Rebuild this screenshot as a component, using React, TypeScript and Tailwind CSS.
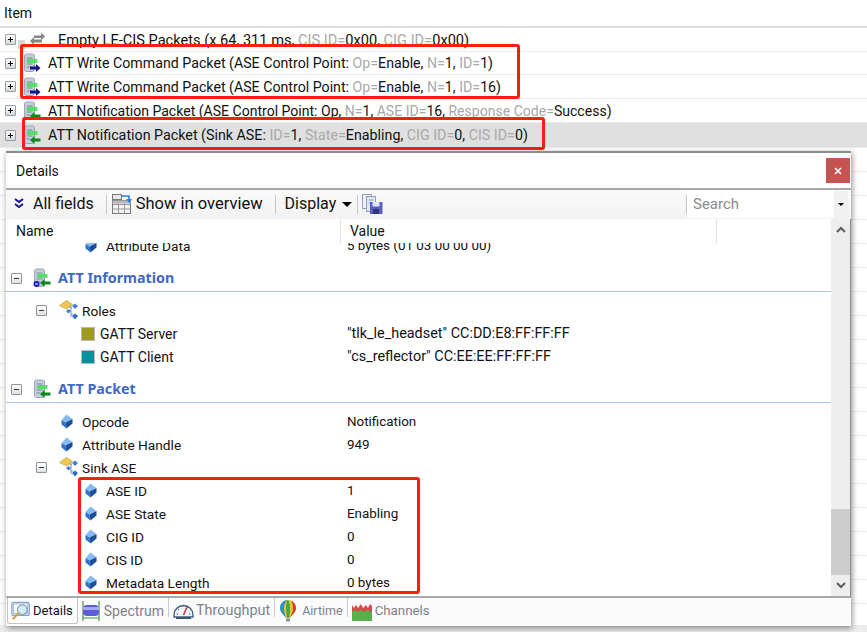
import React from "react";

const Plus = () => (
  <span className="relative inline-block w-[11px] h-[11px] border border-[#9a9fa6] bg-gradient-to-b from-white to-[#d5d8dc] rounded-[1px] shrink-0">
    <span className="absolute left-[2px] top-[4px] w-[5px] h-[1px] bg-black" />
    <span className="absolute left-[4px] top-[2px] w-[1px] h-[5px] bg-black" />
  </span>
);

const Minus = () => (
  <span className="relative inline-block w-[11px] h-[11px] border border-[#8f949b] bg-gradient-to-b from-white to-[#dfe1e4] rounded-[1px] shrink-0">
    <span className="absolute left-[2px] top-[4px] w-[5px] h-[1px] bg-[#333]" />
  </span>
);

const PacketIcon = ({ arrow = "right", info = false }: { arrow?: "right" | "left"; info?: boolean }) => (
  <svg width="20" height="20" viewBox="0 0 20 20" className="shrink-0">
    <rect x="1.500" y="1" width="10" height="17.500" rx="2" fill="#c6cedb" stroke="#9aa6b8" />
    <path d="M3.500 5h6M3.500 8h6M3.500 11h6M3.500 14h4" stroke="#7f8a9c" strokeWidth="1" />
    <rect x="4.500" y="6" width="10" height="4" fill="#48e255" opacity="0.9" />
    {arrow === "right" ? (
      <path d="M7 13.500h6v-2.500l4.500 4-4.500 4v-2.500H7z" fill="#14148c" />
    ) : (
      <path d="M17.500 13.500h-6v-2.500L7 15l4.500 4v-2.500h6z" fill="#0c8a1c" />
    )}
    {info && <circle cx="3.500" cy="16" r="3" fill="#1a1ad0" />}
    {info && <rect x="2" y="15.500" width="3" height="1" fill="#fff" />}
  </svg>
);

const Diamond = () => (
  <svg width="12" height="15" viewBox="0 0 12 15" className="shrink-0 ml-[2px]">
    <path d="M5.500 0.500 11.500 5 4.500 8.500 0.500 6z" fill="#86baf2" />
    <path d="M0.500 6 4.500 8.500 5.500 14.500 0.500 10.500z" fill="#2f74c8" />
    <path d="M11.500 5 4.500 8.500 5.500 14.500 11.500 9.500z" fill="#1a4f9c" />
  </svg>
);

const RolesIcon = () => (
  <svg width="20" height="21" viewBox="0 0 20 21" className="shrink-0">
    <path d="M0.500 5.500 7.500 0.500l6 4-6 4.500z" fill="#efc650" stroke="#b8963a" strokeWidth="0.6" />
    <path d="M10 7h3M12 7v10M12 14h2" stroke="#7c93ad" strokeWidth="1" fill="none" />
    <path d="M16 3.500l3 2.500-3 3-3-3z" fill="#3f84d8" />
    <path d="M9.500 9l2.500 2-2.500 2.500L7 11z" fill="#3f84d8" />
    <path d="M16 13.500l3 2.500-3 3.500-3-3.500z" fill="#2f6fc0" />
  </svg>
);

const Dim = ({ children }: { children: React.ReactNode }) => <span className="text-[#a9a9a9]">{children}</span>;

const ListRow = ({
  icon,
  children,
  selected = false,
  height = "h-[24px]",
  size = "text-[14.2px]",
}: {
  icon: React.ReactNode;
  children: React.ReactNode;
  selected?: boolean;
  height?: string;
  size?: string;
}) => (
  <div className={`${height} flex items-center pl-[5px] border-b border-[#ebebeb] ${selected ? "bg-[#e0e0e0]" : "bg-white"}`}>
    <Plus />
    <span className="w-[32px] flex justify-center shrink-0 pl-[2px]">{icon}</span>
    <span className={`whitespace-nowrap ${size}`}>{children}</span>
  </div>
);

const TreeRow = ({
  indent,
  toggle = false,
  icon,
  iconW = "w-[23px]",
  name,
  value,
  valueSize = "text-[13.400px]",
  nameSize = "text-[13.700px]",
}: {
  indent: string;
  toggle?: boolean;
  icon: React.ReactNode;
  iconW?: string;
  name: string;
  value?: string;
  valueSize?: string;
  nameSize?: string;
}) => (
  <div className="h-[23px] flex items-center shrink-0">
    <div className={`w-[341px] flex items-center ${indent} shrink-0`}>
      {toggle && <span className="w-[23px] -ml-[23px] flex"><Minus /></span>}
      <span className={`${iconW} flex shrink-0 items-center`}>{icon}</span>
      <span className={`whitespace-nowrap ${nameSize}`}>{name}</span>
    </div>
    {value && <span className={`whitespace-nowrap ${valueSize}`}>{value}</span>}
  </div>
);

const Section = ({ icon, title, className }: { icon: React.ReactNode; title: string; className: string }) => (
  <div className={`h-[29px] pt-[2px] flex items-center shrink-0 ${className}`}>
    <span className="ml-[5px] flex"><Minus /></span>
    <span className="ml-[11px] w-[25px] flex shrink-0">{icon}</span>
    <span className="font-bold text-[14.3px] text-[#4169c4] whitespace-nowrap" style={{ fontFamily: '"Noto Sans", sans-serif' }}>{title}</span>
  </div>
);

const Sep = () => <span className="w-[1px] h-[19px] bg-[#c9c9c9] shrink-0" />;

const ToolbarIconAllFields = () => (
  <svg width="12" height="12" viewBox="0 0 12 12" className="shrink-0">
    <path d="M2 1l4 3 4-3M2 6l4 3 4-3" stroke="#14148c" strokeWidth="2" fill="none" />
  </svg>
);

const OverviewIcon = () => (
  <svg width="20" height="20" viewBox="0 0 20 20" className="shrink-0">
    <rect x="0.5" y="0.5" width="9" height="5" fill="#e8e8e8" stroke="#777" />
    <rect x="0.5" y="6.5" width="18" height="13" fill="#f2f2f2" stroke="#777" />
    <path d="M0.5 10.5h18M0.5 15h18M6.5 6.5v13M12.5 6.5v13" stroke="#999" />
    <rect x="0.5" y="6.5" width="18" height="3" fill="#b8b8b8" />
    <path d="M10 2h7v4" stroke="#2b7fe0" strokeWidth="1.6" fill="none" />
    <path d="M14 5h6l-3 4z" fill="#2b7fe0" />
  </svg>
);

const SaveIcon = () => (
  <svg width="21" height="20" viewBox="0 0 21 20" className="shrink-0">
    <rect x="0.5" y="0.5" width="9" height="14" fill="#eef2f8" stroke="#8fa0b8" />
    <rect x="4.5" y="2.5" width="9" height="15" fill="#dfe7f2" stroke="#8fa0b8" />
    <path d="M6.5 6h5M6.5 9h4" stroke="#8fa0b8" />
    <rect x="8" y="8" width="12.5" height="12" fill="#5a60c0" />
    <rect x="10.5" y="8" width="7" height="4.5" fill="#dfe3f5" />
    <rect x="11" y="15" width="6" height="5" fill="#30347c" />
  </svg>
);

const TabDetailsIcon = () => (
  <svg width="20" height="22" viewBox="0 0 23 23" className="shrink-0">
    <rect x="1" y="1.5" width="20" height="15" rx="1" fill="#dfe8f5" stroke="#5a7fae" />
    <rect x="3" y="3.5" width="16" height="11" fill="#fff" stroke="#9bb6d6" />
    <circle cx="13" cy="10" r="5.500" fill="#d6ecf7" stroke="#7ea3b8" strokeWidth="1.3" />
    <path d="M8.500 14 2 21" stroke="#d9a441" strokeWidth="2.4" />
  </svg>
);

const SpectrumIcon = () => (
  <svg width="18" height="22" viewBox="0 0 18 22" className="shrink-0">
    <path d="M1 1v20M17 1v20M1 18h16" stroke="#3c9a46" strokeWidth="1.2" />
    <rect x="1" y="5" width="16" height="11" rx="4" fill="#5c5cd8" />
    <rect x="1" y="7" width="16" height="3" fill="#a7a7f2" />
  </svg>
);

const GaugeIcon = () => (
  <svg width="21" height="20" viewBox="0 0 21 20" className="shrink-0">
    <path d="M1 14a9.5 9.5 0 1 1 19 0v2H1z" fill="#f4f8fc" stroke="#45607e" strokeWidth="1.4" />
    <path d="M3 17h15" stroke="#3d5570" strokeWidth="2" />
    <path d="M10.5 14 14 6" stroke="#c8352c" strokeWidth="1.6" />
    <path d="M5 8l1 1M10.5 4v1.5M3.5 13h1.5M16 13h1.5" stroke="#45607e" />
  </svg>
);

const BalloonIcon = () => (
  <svg width="18" height="24" viewBox="0 0 18 24" className="shrink-0">
    <path d="M9 1C4 1 1 5 1 9c0 4 4 7 6 10h4c2-3 6-6 6-10 0-4-3-8-8-8z" fill="#e5c62c" />
    <path d="M1 9c0-4 3-8 8-8-2 1-4 4-4 8 0 3 1 7 2 10C5 16 1 13 1 9z" fill="#2f8fd8" />
    <path d="M9 1c-1.5 1-2 4-2 8 0 4 1 7 1 10h2c1-3 1-6 1-10 0-4-1-7-2-8z" fill="#4aa83f" />
    <path d="M12 1.5c3 1.500 5 4.500 5 7.500 0 4-4 7-6 10 1-3 3-6 3-10 0-3-1-6-2-7.500z" fill="#d83d2c" />
    <rect x="7" y="19.500" width="4" height="3" fill="#8a8fa0" />
  </svg>
);

const ChannelsIcon = () => (
  <svg width="20" height="20" viewBox="0 0 20 20" className="shrink-0">
    <path d="M0 4l2 3 2-3 2 3 3-4 2 4 3-3 2 3 2-4 2 2v15H0z" fill="#d84a4a" />
    <path d="M0 11l3-2 3 2 3-2 3 2 3-2 5 2v9H0z" fill="#56b04a" />
  </svg>
);

const Annot = ({ className }: { className: string }) => (
  <div className={`absolute border-[3px] border-[#ff1c10] rounded-[3px] pointer-events-none ${className}`} />
);

const Tab = ({
  icon,
  label,
  active = false,
  gap,
  size,
}: {
  icon: React.ReactNode;
  label: string;
  active?: boolean;
  gap: string;
  size: string;
}) => (
  <div
    className={`h-[26px] flex items-center ${gap} ${size} whitespace-nowrap ${
      active
        ? "bg-white border border-t-0 border-[#c4c4c4] rounded-b-[3px] pl-[3px] pr-[4px] text-[#111]"
        : "px-[1px] text-[#7c838c]"
    }`}
  >
    {icon}
    <span>{label}</span>
  </div>
);

export default function App() {
  const back = Array.from({ length: 20 }, (_, i) => i);
  return (
    <div
      className="relative w-[867px] h-[632px] overflow-hidden bg-white text-[14px] leading-[20px] text-[#111]"
      style={{ fontFamily: "Roboto, sans-serif" }}
    >
      <div className="h-[28px] pl-[4px] flex items-center border-b-2 border-[#dcdcdc]">Item</div>
      <ListRow
        size="text-[14.6px]"
        icon={
          <svg width="28" height="18" viewBox="0 0 28 18" className="-ml-[2px]">
            <rect x="0" y="9" width="7" height="9" fill="#d7d7d7" />
            <path d="M16 4.500h7V1.500l4 4-4 4v-2.500h-7zM24 8.500h-8V6l-4 4 4 4v-2.500h8z" fill="#858585" />
          </svg>
        }
      >
        <span className="pl-[10px]">Empty LE-CIS Packets (x 64, 311 ms, <Dim>CIS ID=</Dim>0x00, <Dim>CIG ID=</Dim>0x00)</span>
      </ListRow>
      <ListRow icon={<PacketIcon />} height="h-[23px]">
        ATT Write Command Packet (ASE Control Point: <Dim>Op=</Dim>Enable, <Dim>N=</Dim>1, <Dim>ID=</Dim>1)
      </ListRow>
      <ListRow icon={<PacketIcon />}>
        ATT Write Command Packet (ASE Control Point: <Dim>Op=</Dim>Enable, <Dim>N=</Dim>1, <Dim>ID=</Dim>16)
      </ListRow>
      <ListRow icon={<PacketIcon arrow="left" />} size="text-[14.05px]">
        ATT Notification Packet (ASE Control Point: Op, <Dim>N=</Dim>1, <Dim>ASE ID=</Dim>16, <Dim>Response Code=</Dim>Success)
      </ListRow>
      <ListRow icon={<PacketIcon arrow="left" />} selected height="h-[25px]" size="text-[14.27px]">
        ATT Notification Packet (Sink ASE: <Dim>ID=</Dim>1, <Dim>State=</Dim>Enabling, <Dim>CIG ID=</Dim>0, <Dim>CIS ID=</Dim>0)
      </ListRow>
      {back.map((i) => (
        <div key={i} className="h-[24px] border-b border-[#ebebeb]" />
      ))}
      <div className="absolute left-0 right-0 top-[625px] h-[7px] bg-[#ececec]" />

      <Annot className="left-[20px] top-[44px] w-[500px] h-[55px]" />
      <Annot className="left-[22px] top-[117px] w-[523px] h-[33px]" />

      {/* Details window */}
      <div className="absolute left-[6px] top-[151px] w-[845px] h-[475px] flex flex-col bg-white border-t-2 border-[#8c8c8c] shadow-[1px_2px_6px_rgba(0,0,0,0.45)]">
        <div className="h-[37px] shrink-0 flex items-center justify-between border-b-2 border-[#a8a8a8]">
          <span className="pl-[10px]">Details</span>
          <span className="w-[24px] h-[25px] mr-[1px] bg-[#c75252] flex items-center justify-center">
            <svg width="8" height="8" viewBox="0 0 8 8">
              <path d="M1 1l6 6M7 1 1 7" stroke="#fff" strokeWidth="1.6" />
            </svg>
          </span>
        </div>
        <div className="h-[29px] pb-[1px] shrink-0 flex items-center bg-gradient-to-b from-[#fafafa] to-[#f2f2f2] text-[16px]">
          <span className="ml-[7px] mr-[8px] flex"><ToolbarIconAllFields /></span>
          <span className="whitespace-nowrap">All fields</span>
          <span className="ml-[12px] mr-[5px] flex"><Sep /></span>
          <OverviewIcon />
          <span className="ml-[4px] whitespace-nowrap text-[16.500px]">Show in overview</span>
          <span className="ml-[12px] mr-[9px] flex"><Sep /></span>
          <span className="whitespace-nowrap">Display</span>
          <span className="ml-[6px] w-0 h-0 border-x-[5px] border-x-transparent border-t-[5px] border-t-black" />
          <span className="ml-[5px] mr-[4px] flex"><Sep /></span>
          <SaveIcon />
          <span className="ml-auto flex items-center h-full">
            <Sep />
            <span className="w-[147px] h-[28px] bg-white pl-[6px] flex items-center text-[#8a8a8a] text-[15px]">Search</span>
            <span className="w-[14px] h-[26px] bg-[#f0f0f0] flex items-center justify-center mr-[3px]">
              <span className="w-0 h-0 border-x-[3px] border-x-transparent border-t-[3px] border-t-black" />
            </span>
          </span>
        </div>
        <div className="flex-1 min-h-0 flex border-r border-[#8c8c8c] border-b-2 border-b-[#a8a8a8]">
          <div className="flex-1 min-w-0 flex flex-col overflow-hidden">
            <div className="h-[24px] shrink-0 flex items-center bg-white relative z-10">
              <span className="w-[335px] pl-[10px] h-full flex items-center border-r border-[#e2e2e2]">Name</span>
              <span className="w-[376px] pl-[9px] h-full flex items-center border-r border-[#e2e2e2]">Value</span>
            </div>
            <div className="flex-1 min-h-0 overflow-hidden">
              <div className="-mt-[9px] flex flex-col">
                <TreeRow indent="pl-[77px]" icon={<Diamond />} name="Attribute Data" value="5 bytes (01 03 00 00 00)" />
                <Section
                  icon={<PacketIcon arrow="left" info />}
                  title="ATT Information"
                  className="mt-[6px] border-b border-b-[#a9c4ea]"
                />
                <div className="h-[7px]" />
                <TreeRow indent="pl-[53px]" toggle icon={<RolesIcon />} name="Roles" />
                <TreeRow
                  indent="pl-[75px]"
                  iconW="w-[19px]"
                  nameSize="text-[14px]"
                  valueSize="text-[14.400px]"
                  icon={<span className="w-[14px] h-[14px] bg-[#a09a20] border border-[#b9b9b9]" />}
                  name="GATT Server"
                  value={'"tlk_le_headset" CC:DD:E8:FF:FF:FF'}
                />
                <TreeRow
                  indent="pl-[75px]"
                  iconW="w-[19px]"
                  nameSize="text-[14px]"
                  valueSize="text-[14.400px]"
                  icon={<span className="w-[14px] h-[14px] bg-[#00929f] border border-[#b9b9b9]" />}
                  name="GATT Client"
                  value={'"cs_reflector" CC:EE:EE:FF:FF:FF'}
                />
                <Section
                  icon={<PacketIcon arrow="left" />}
                  title="ATT Packet"
                  className="mt-[6px] border-b border-b-[#a9c4ea]"
                />
                <div className="h-[7px]" />
                <TreeRow indent="pl-[53px]" icon={<Diamond />} name="Opcode" value="Notification" />
                <TreeRow indent="pl-[53px]" icon={<Diamond />} name="Attribute Handle" value="949" />
                <TreeRow indent="pl-[53px]" toggle icon={<RolesIcon />} name="Sink ASE" />
                <TreeRow indent="pl-[77px]" icon={<Diamond />} name="ASE ID" value="1" />
                <TreeRow indent="pl-[77px]" icon={<Diamond />} name="ASE State" value="Enabling" />
                <TreeRow indent="pl-[77px]" icon={<Diamond />} name="CIG ID" value="0" />
                <TreeRow indent="pl-[77px]" icon={<Diamond />} name="CIS ID" value="0" />
                <TreeRow indent="pl-[77px]" icon={<Diamond />} name="Metadata Length" value="0 bytes" />
              </div>
            </div>
          </div>
          <div className="w-[19px] shrink-0 flex flex-col bg-[#eeeeee]">
            <span className="h-[21px] flex items-center justify-center">
              <svg width="10" height="7" viewBox="0 0 10 7"><path d="M1 6l4-4 4 4" stroke="#5c5c5c" strokeWidth="2" fill="none" /></svg>
            </span>
            <span className="flex-1" />
            <span className="h-[66px] bg-[#cdcdcd]" />
            <span className="h-[21px] flex items-center justify-center">
              <svg width="10" height="7" viewBox="0 0 10 7"><path d="M1 1l4 4 4-4" stroke="#5c5c5c" strokeWidth="2" fill="none" /></svg>
            </span>
          </div>
        </div>
        <div className="h-[28px] shrink-0 bg-[#fbfbfb] flex items-start pl-[1px] gap-[3px]">
          <Tab active icon={<TabDetailsIcon />} label="Details" gap="gap-[2px]" size="text-[13px]" />
          <Tab icon={<SpectrumIcon />} label="Spectrum" gap="gap-[4px]" size="text-[14px]" />
          <Sep />
          <Tab icon={<GaugeIcon />} label="Throughput" gap="gap-[2px]" size="text-[14.400px]" />
          <Sep />
          <Tab icon={<BalloonIcon />} label="Airtime" gap="gap-[5px]" size="text-[12.500px]" />
          <Sep />
          <Tab icon={<ChannelsIcon />} label="Channels" gap="gap-[3px]" size="text-[13.300px]" />
        </div>
      </div>

      <Annot className="left-[78px] top-[477px] w-[342px] h-[117px]" />
    </div>
  );
}
